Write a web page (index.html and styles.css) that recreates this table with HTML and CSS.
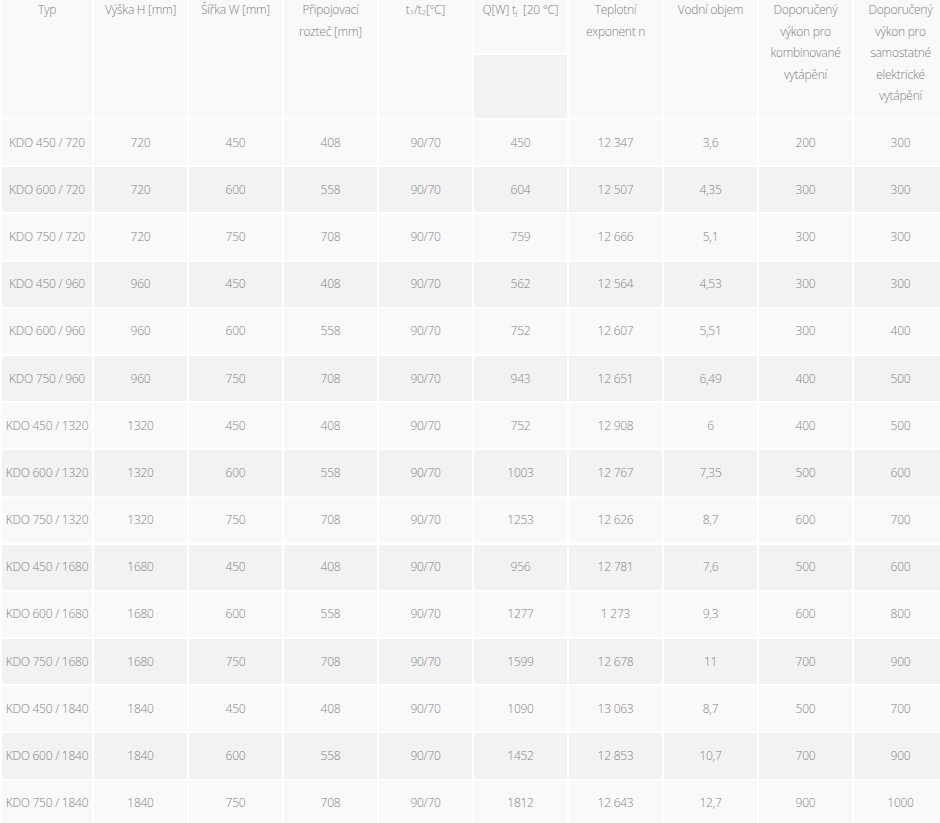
FILE: index.html
```html
<!DOCTYPE html>
<html lang="cs">
<head>
<meta charset="utf-8">
<title>KDO</title>
<link rel="stylesheet" href="styles.css">
</head>
<body>
<table class="spec">
  <colgroup>
    <col class="c-first"><col class="c"><col class="c"><col class="c"><col class="c"><col class="c"><col class="c"><col class="c"><col class="c"><col class="c">
  </colgroup>
  <thead>
    <tr>
      <th>Typ</th>
      <th>Výška H [mm]</th>
      <th>Šířka W [mm]</th>
      <th>Připojovací rozteč [mm]</th>
      <th>t<sub>1</sub>/t<sub>2</sub>[°C]</th>
      <th class="q"><div class="q-label">Q[W] t<sub>j</sub> &nbsp;[20 °C]</div><div class="q-box"></div></th>
      <th>Teplotní exponent n</th>
      <th>Vodní objem</th>
      <th>Doporučený výkon pro kombinované vytápění</th>
      <th>Doporučený výkon pro samostatné elektrické vytápění</th>
    </tr>
  </thead>
  <tbody>
    <tr><td>KDO 450 / 720</td><td>720</td><td>450</td><td>408</td><td>90/70</td><td>450</td><td>12 347</td><td>3,6</td><td>200</td><td>300</td></tr>
    <tr><td>KDO 600 / 720</td><td>720</td><td>600</td><td>558</td><td>90/70</td><td>604</td><td>12 507</td><td>4,35</td><td>300</td><td>300</td></tr>
    <tr><td>KDO 750 / 720</td><td>720</td><td>750</td><td>708</td><td>90/70</td><td>759</td><td>12 666</td><td>5,1</td><td>300</td><td>300</td></tr>
    <tr><td>KDO 450 / 960</td><td>960</td><td>450</td><td>408</td><td>90/70</td><td>562</td><td>12 564</td><td>4,53</td><td>300</td><td>300</td></tr>
    <tr><td>KDO 600 / 960</td><td>960</td><td>600</td><td>558</td><td>90/70</td><td>752</td><td>12 607</td><td>5,51</td><td>300</td><td>400</td></tr>
    <tr><td>KDO 750 / 960</td><td>960</td><td>750</td><td>708</td><td>90/70</td><td>943</td><td>12 651</td><td>6,49</td><td>400</td><td>500</td></tr>
    <tr><td>KDO 450 / 1320</td><td>1320</td><td>450</td><td>408</td><td>90/70</td><td>752</td><td>12 908</td><td>6</td><td>400</td><td>500</td></tr>
    <tr><td>KDO 600 / 1320</td><td>1320</td><td>600</td><td>558</td><td>90/70</td><td>1003</td><td>12 767</td><td>7,35</td><td>500</td><td>600</td></tr>
    <tr><td>KDO 750 / 1320</td><td>1320</td><td>750</td><td>708</td><td>90/70</td><td>1253</td><td>12 626</td><td>8,7</td><td>600</td><td>700</td></tr>
    <tr><td>KDO 450 / 1680</td><td>1680</td><td>450</td><td>408</td><td>90/70</td><td>956</td><td>12 781</td><td>7,6</td><td>500</td><td>600</td></tr>
    <tr><td>KDO 600 / 1680</td><td>1680</td><td>600</td><td>558</td><td>90/70</td><td>1277</td><td>1 273</td><td>9,3</td><td>600</td><td>800</td></tr>
    <tr><td>KDO 750 / 1680</td><td>1680</td><td>750</td><td>708</td><td>90/70</td><td>1599</td><td>12 678</td><td>11</td><td>700</td><td>900</td></tr>
    <tr><td>KDO 450 / 1840</td><td>1840</td><td>450</td><td>408</td><td>90/70</td><td>1090</td><td>13 063</td><td>8,7</td><td>500</td><td>700</td></tr>
    <tr><td>KDO 600 / 1840</td><td>1840</td><td>600</td><td>558</td><td>90/70</td><td>1452</td><td>12 853</td><td>10,7</td><td>700</td><td>900</td></tr>
    <tr><td>KDO 750 / 1840</td><td>1840</td><td>750</td><td>708</td><td>90/70</td><td>1812</td><td>12 643</td><td>12,7</td><td>900</td><td>1000</td></tr>
  </tbody>
</table>
</body>
</html>
```
FILE: styles.css
```css
html, body {
  margin: 0;
  padding: 0;
  background: #ffffff;
  overflow: hidden;
}

.spec {
  margin-top: -3px;
  width: 949px;
  table-layout: fixed;
  border-collapse: collapse;
  font-family: "Open Sans", "Liberation Sans", sans-serif;
  font-size: 12px;
  font-weight: 300;
  letter-spacing: -0.25px;
  color: #838383;
}

.c-first { width: 92px; }
.c { width: 95px; }

.spec th,
.spec td {
  border: 2px solid #ffffff;
  text-align: center;
  padding: 0 2px;
}

.spec th {
  font-weight: 300;
  vertical-align: top;
  line-height: 21.6px;
  height: 117px;
  background: #f9f9f9;
  color: #808080;
}

.spec th sub {
  font-size: 8px;
  vertical-align: baseline;
  position: relative;
  top: 1px;
}

.spec th.q {
  padding: 0;
}

.q-label {
  height: 54px;
  padding: 0 2px;
}

.q-box {
  height: 63px;
  border-top: 2px solid #ffffff;
  background: #f2f2f2;
}

.spec td {
  height: 45.2px;
  vertical-align: middle;
  line-height: 18px;
  white-space: nowrap;
}

.spec tbody tr:nth-child(odd) td { background: #f9f9f9; }
.spec tbody tr:nth-child(even) td { background: #f2f2f2; }
```
